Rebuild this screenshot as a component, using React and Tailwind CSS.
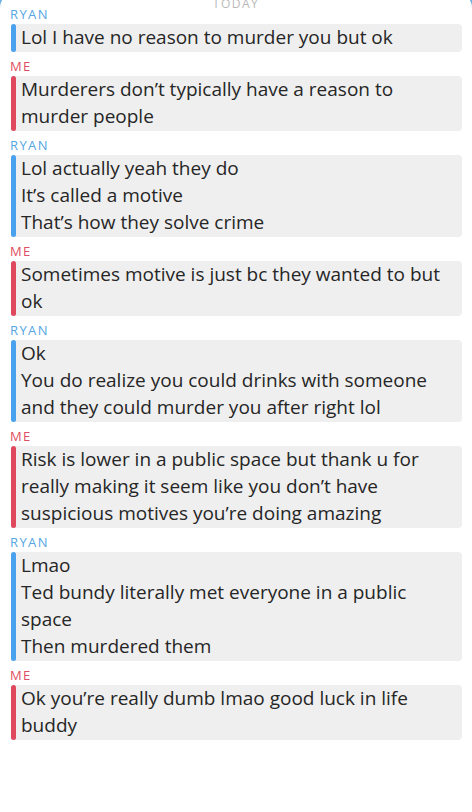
const messages = [
  { from: 'RYAN', lines: ['Lol I have no reason to murder you but ok'] },
  { from: 'ME', lines: ['Murderers don’t typically have a reason to', 'murder people'] },
  { from: 'RYAN', lines: ['Lol actually yeah they do', 'It’s called a motive', 'That’s how they solve crime'] },
  { from: 'ME', lines: ['Sometimes motive is just bc they wanted to but', 'ok'] },
  {
    from: 'RYAN',
    lines: ['Ok', 'You do realize you could drinks with someone', 'and they could murder you after right lol'],
  },
  {
    from: 'ME',
    lines: [
      'Risk is lower in a public space but thank u for',
      'really making it seem like you don’t have',
      'suspicious motives you’re doing amazing',
    ],
  },
  {
    from: 'RYAN',
    lines: ['Lmao', 'Ted bundy literally met everyone in a public', 'space', 'Then murdered them'],
  },
  { from: 'ME', lines: ['Ok you’re really dumb lmao good luck in life', 'buddy'] },
];

const Message = ({ from, lines }) => {
  const isMe = from === 'ME';
  return (
    <div>
      <div
        className={`mt-[6px] mb-[2px] h-[16px] pl-[10px] text-[13px] leading-[16px] font-medium tracking-[1.4px] ${
          isMe ? 'text-[#df4d62]' : 'text-[#55a6e2]'
        }`}
      >
        {from}
      </div>
      <div className="ml-[11px] mr-[10px] flex rounded-[4px] bg-[#efefef]">
        <div className={`w-[5px] shrink-0 rounded-[3px] ${isMe ? 'bg-[#e0485e]' : 'bg-[#4aa2ee]'}`} />
        <div className="pl-[5px] pb-[1px] text-[19px] leading-[27px] text-[#262626]">
          {lines.map((line, i) => (
            <div key={i} className="whitespace-nowrap">
              {line}
            </div>
          ))}
        </div>
      </div>
    </div>
  );
};

export default function App() {
  return (
    <div
      className="h-[812px] w-[472px] overflow-hidden bg-[#6fb0e0]"
      style={{ fontFamily: '"Open Sans", Lato, sans-serif' }}
    >
      <div className="-mt-[8px] h-[830px] rounded-t-[16px] bg-white pt-[8px]">
        <div className="-mt-[2px] h-[12px] text-center text-[12px] leading-[12px] font-medium tracking-[1.5px] text-[#b9b9b9]">
          TODAY
        </div>
        <div className="-mt-[10px]">
          {messages.map((m, i) => (
            <Message key={i} {...m} />
          ))}
        </div>
      </div>
    </div>
  );
}
